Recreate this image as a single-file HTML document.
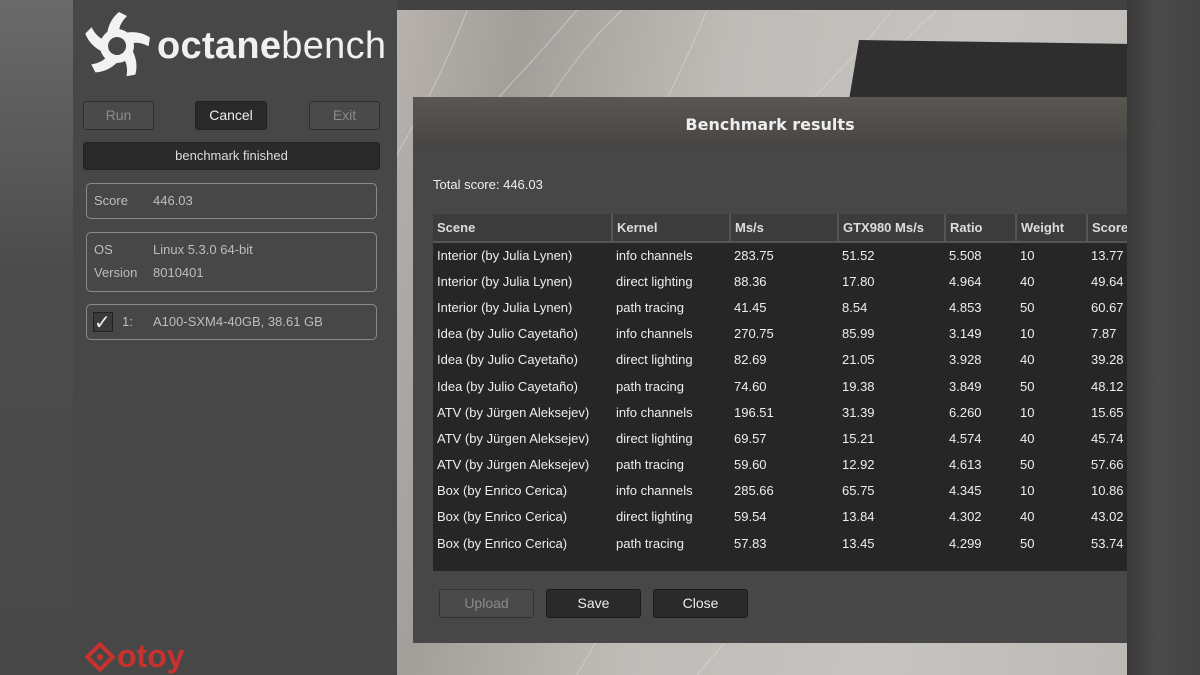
<!DOCTYPE html>
<html><head><meta charset="utf-8"><style>
*{margin:0;padding:0;box-sizing:border-box}
body{width:1200px;height:675px;overflow:hidden;position:relative;background:#454545;font-family:"Liberation Sans",sans-serif;color:#e8e8e8}
.abs{position:absolute}
.btn{position:absolute;border:1px solid #222;border-radius:3px;text-align:center;font-size:14px;line-height:26px}
.box{position:absolute;border:1.5px solid #8a8a8a;border-radius:5px;font-size:13px;color:#bdbdbd}
table{border-collapse:collapse;font-size:13px;table-layout:fixed;width:760px}
td{height:26.2px;padding-left:4px;color:#eee;white-space:nowrap;overflow:hidden}
th{height:28px;text-align:left;padding-left:4px;background:#3c3c3c;border-right:2px solid #555;border-bottom:2px solid #555;font-weight:bold;color:#ddd;white-space:nowrap;overflow:hidden}
</style></head><body>
<div class="abs" style="left:0;top:0;width:73px;height:675px;background:linear-gradient(#6a6a6a,#4c4c4c 40%,#484848)"></div>
<div class="abs" style="left:73px;top:0;width:324px;height:675px;background:#474747"></div>
<div class="abs" style="left:397px;top:0;width:803px;height:10px;background:#424242"></div>
<div class="abs" style="left:1127px;top:0;width:73px;height:675px;background:linear-gradient(90deg,#3a3a3a,#4a4a4a 40%,#444)"></div>
<div class="abs" style="left:397px;top:10px;width:730px;height:665px;background:linear-gradient(100deg,#b8b2ae,#a29e9a 15%,#bfbbb7 40%,#c6c3c0 70%,#bdbab6)">
<svg width="730" height="665" style="position:absolute;left:0;top:0">
<g stroke="#ddd9d4" stroke-width="1" fill="none" opacity=".6">
<path d="M70 0 Q40 80 -10 160"/><path d="M180 0 Q120 70 60 130"/><path d="M225 0 Q160 60 100 180"/><path d="M310 0 Q290 50 250 130"/><path d="M495 0 Q440 70 360 140"/><path d="M540 0 Q450 80 420 160"/><path d="M200 630 L180 665"/><path d="M330 630 L300 665"/>
</g>
<path d="M462 30 L735 34 L735 90 L452 90 Z" fill="#2e2e2e"/>
</svg></div>

<svg class="abs" style="left:83px;top:12px" width="68" height="68" viewBox="-34 -34 68 68">
<g fill="#f2f2f2">
<path d="M0 -17 A17 17 0 1 1 -0.1 -17 Z M0 -9 A9 9 0 1 0 0.1 -9 Z" fill-rule="evenodd"/>
<g id="b"><path d="M-10 -12 Q-8 -26 2 -34 L10 -30 Q2 -22 2 -14 Z"/></g>
<use href="#b" transform="rotate(72)"/><use href="#b" transform="rotate(144)"/><use href="#b" transform="rotate(216)"/><use href="#b" transform="rotate(288)"/>
</g></svg>
<div class="abs" style="left:157px;top:23px;font-size:38px;color:#f0f0f0;letter-spacing:0.3px;line-height:46px"><b>octane</b>bench</div>

<div class="btn" style="left:83px;top:101px;width:71px;height:29px;background:#4a4a4a;color:#8a8a8a;border-color:#2e2e2e">Run</div>
<div class="btn" style="left:195px;top:101px;width:72px;height:29px;background:#2a2a2a;color:#eee">Cancel</div>
<div class="btn" style="left:309px;top:101px;width:71px;height:29px;background:#4a4a4a;color:#8a8a8a;border-color:#2e2e2e">Exit</div>
<div class="btn" style="left:83px;top:142px;width:297px;height:28px;background:#2a2a2a;color:#ddd;font-size:13px">benchmark finished</div>
<div class="box" style="left:86px;top:183px;width:291px;height:36px"><span class="abs" style="left:7px;top:9px">Score</span><span class="abs" style="left:66px;top:9px">446.03</span></div>
<div class="box" style="left:86px;top:232px;width:291px;height:60px"><span class="abs" style="left:7px;top:9px">OS</span><span class="abs" style="left:66px;top:9px">Linux 5.3.0 64-bit</span><span class="abs" style="left:7px;top:32px">Version</span><span class="abs" style="left:66px;top:32px">8010401</span></div>
<div class="box" style="left:86px;top:304px;width:291px;height:36px"><span class="abs" style="left:6px;top:7px;width:20px;height:20px;background:#3a3a3a;border:1px solid #222;color:#eee;font-size:20px;line-height:20px">✓</span><span class="abs" style="left:35px;top:9px">1:</span><span class="abs" style="left:66px;top:9px">A100-SXM4-40GB, 38.61 GB</span></div>

<div class="abs" style="left:85px;top:640px;font-size:32px;font-weight:bold;color:#c8322e;line-height:32px"><span style="display:inline-block;width:22px;height:22px;border:4px solid #c8322e;transform:rotate(45deg);margin:0 6px 0 4px;vertical-align:-1px;position:relative"><span style="position:absolute;left:4px;top:4px;width:6px;height:6px;background:#c8322e;border-radius:50%"></span></span>otoy</div>

<div class="abs" style="left:413px;top:97px;width:714px;height:546px;background:#474747;overflow:hidden">
<div class="abs" style="left:0;top:0;width:714px;height:52px;background:linear-gradient(#5a5753,#4f4c49 60%,#474543);text-align:center;line-height:56px;font-size:16px;font-weight:bold;color:#eee;font-family:'DejaVu Sans',sans-serif">Benchmark results</div>
<div class="abs" style="left:20px;top:80px;font-size:13px;color:#eee">Total score: 446.03</div>
<div class="abs" style="left:20px;top:117px;width:700px;height:357px;background:#262626;overflow:hidden">
<table>
<colgroup><col style="width:179px"><col style="width:118px"><col style="width:108px"><col style="width:107px"><col style="width:71px"><col style="width:71px"><col style="width:106px"></colgroup>
<tr><th>Scene</th><th>Kernel</th><th>Ms/s</th><th>GTX980 Ms/s</th><th>Ratio</th><th>Weight</th><th>Score</th></tr>
<tr><td>Interior (by Julia Lynen)</td><td>info channels</td><td>283.75</td><td>51.52</td><td>5.508</td><td>10</td><td>13.77</td></tr>
<tr><td>Interior (by Julia Lynen)</td><td>direct lighting</td><td>88.36</td><td>17.80</td><td>4.964</td><td>40</td><td>49.64</td></tr>
<tr><td>Interior (by Julia Lynen)</td><td>path tracing</td><td>41.45</td><td>8.54</td><td>4.853</td><td>50</td><td>60.67</td></tr>
<tr><td>Idea (by Julio Cayetaño)</td><td>info channels</td><td>270.75</td><td>85.99</td><td>3.149</td><td>10</td><td>7.87</td></tr>
<tr><td>Idea (by Julio Cayetaño)</td><td>direct lighting</td><td>82.69</td><td>21.05</td><td>3.928</td><td>40</td><td>39.28</td></tr>
<tr><td>Idea (by Julio Cayetaño)</td><td>path tracing</td><td>74.60</td><td>19.38</td><td>3.849</td><td>50</td><td>48.12</td></tr>
<tr><td>ATV (by Jürgen Aleksejev)</td><td>info channels</td><td>196.51</td><td>31.39</td><td>6.260</td><td>10</td><td>15.65</td></tr>
<tr><td>ATV (by Jürgen Aleksejev)</td><td>direct lighting</td><td>69.57</td><td>15.21</td><td>4.574</td><td>40</td><td>45.74</td></tr>
<tr><td>ATV (by Jürgen Aleksejev)</td><td>path tracing</td><td>59.60</td><td>12.92</td><td>4.613</td><td>50</td><td>57.66</td></tr>
<tr><td>Box (by Enrico Cerica)</td><td>info channels</td><td>285.66</td><td>65.75</td><td>4.345</td><td>10</td><td>10.86</td></tr>
<tr><td>Box (by Enrico Cerica)</td><td>direct lighting</td><td>59.54</td><td>13.84</td><td>4.302</td><td>40</td><td>43.02</td></tr>
<tr><td>Box (by Enrico Cerica)</td><td>path tracing</td><td>57.83</td><td>13.45</td><td>4.299</td><td>50</td><td>53.74</td></tr>
</table></div>
<div class="btn" style="left:26px;top:492px;width:95px;height:29px;background:#4a4a4a;color:#8a8a8a;border-color:#333">Upload</div>
<div class="btn" style="left:133px;top:492px;width:95px;height:29px;background:#2a2a2a;color:#eee;border-color:#1a1a1a">Save</div>
<div class="btn" style="left:240px;top:492px;width:95px;height:29px;background:#2a2a2a;color:#eee;border-color:#1a1a1a">Close</div>
</div>
</body></html>
